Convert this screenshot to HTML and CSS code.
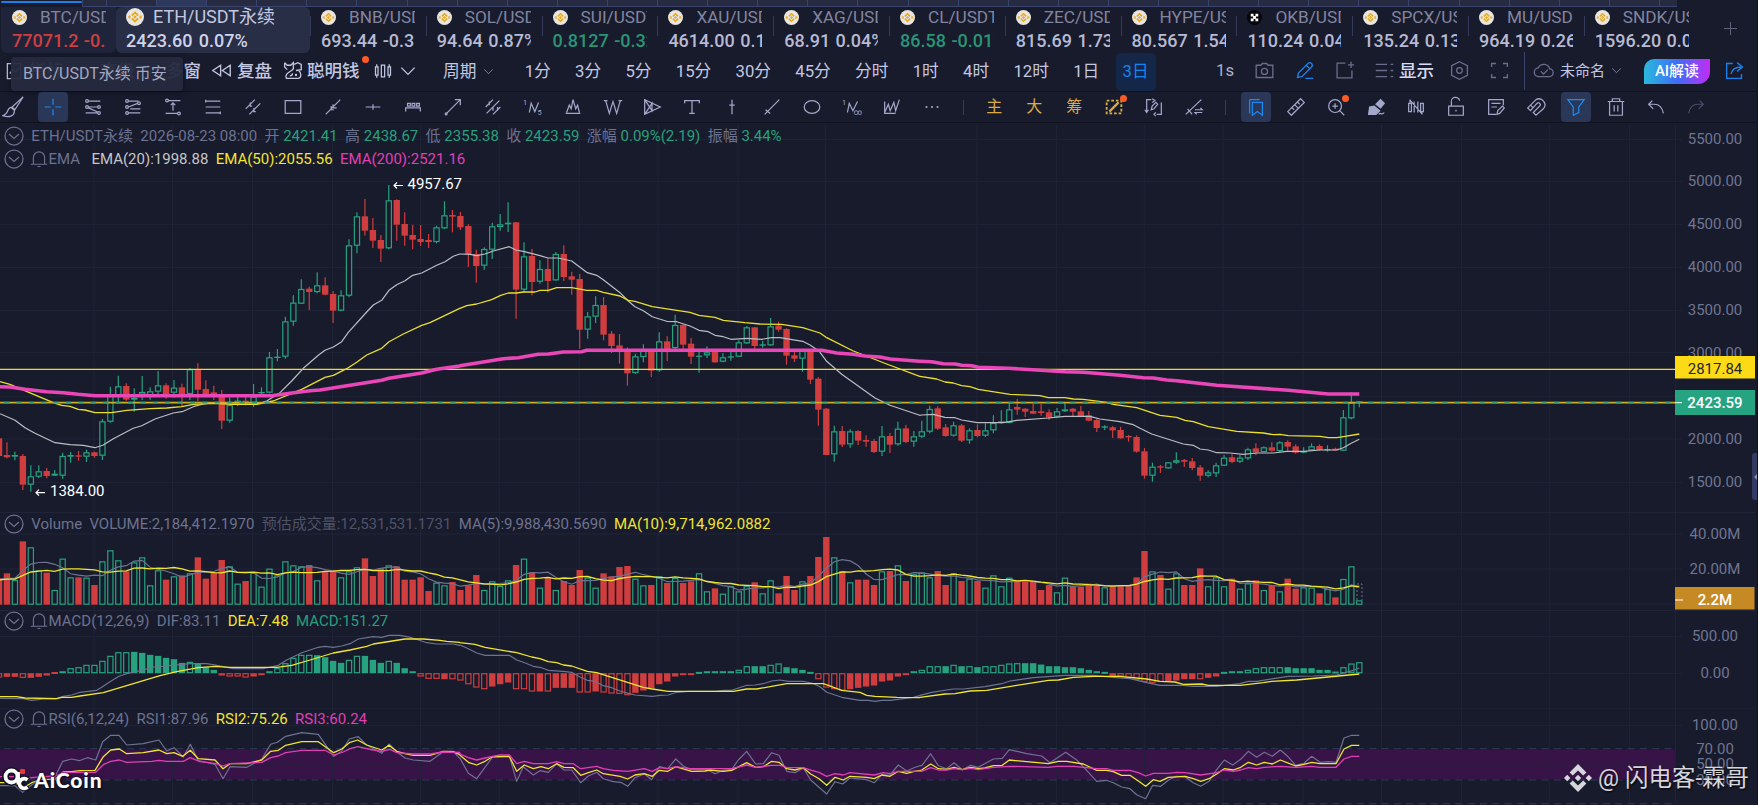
FILE: index.html
```html
<!DOCTYPE html>
<html lang="zh-CN">
<head>
<meta charset="utf-8">
<title>ETH/USDT永续 - AiCoin</title>
<link rel="stylesheet" href="styles.css">
</head>
<body>
<div class="app">
  <div class="strip"><i class="strip-active"></i><div class="strip-cells" id="strip"></div></div>
  <div class="tabs" id="tabs"></div>

  <div class="periodbar">
    <div class="pgroup tools">
      <span class="ic" data-icon="indicator"></span><span class="cn">指标</span>
      <span class="cn adv">高级</span>
      <span class="cn multi">多窗</span>
      <span class="ic rewind" data-icon="rewind"></span><span class="cn">复盘</span>
      <span class="ic fox" data-icon="fox"></span><span class="cn money">聪明钱<b class="dot"></b></span>
      <span class="ic kline" data-icon="kline"></span><span class="ic chev" data-icon="chevron"></span>
    </div>
    <div class="pgroup periods">
      <span class="cycle">周期 <span class="ic small" data-icon="chevron"></span></span>
      <span>1分</span><span>3分</span><span>5分</span><span>15分</span><span>30分</span><span>45分</span><span>分时</span><span>1时</span><span>4时</span><span>12时</span><span>1日</span><span class="on">3日</span>
    </div>
    <div class="pgroup right">
      <span class="sec">1s</span>
      <span class="cell dim" data-icon="camera"></span>
      <span class="cell blue" data-icon="pen"></span>
      <span class="cell dim" data-icon="addbox"></span>
      <span class="cell dim" data-icon="list"></span>
      <span class="cn show">显示</span>
      <span class="cell dim" data-icon="hex"></span>
      <span class="cell dim" data-icon="full"></span>
      <i class="vline"></i>
      <span class="cell dim cloud" data-icon="cloud"></span>
      <span class="unnamed">未命名</span>
      <span class="ic small dim2" data-icon="chevron"></span>
      <span class="ai">AI解读</span>
      <span class="cell blue share" data-icon="share"></span>
    </div>
    <div class="tooltip">BTC/USDT永续 币安</div>
  </div>

  <div class="drawbar" id="drawbar"></div>

  <div class="pane price">
    <svg id="price" width="1758" height="390" viewBox="0 123 1758 390"></svg>
    <div class="legend first">
      <span class="fold" data-icon="fold"></span>
      <span class="sym">ETH/USDT永续</span><span class="date">2026-08-23 08:00</span>
      <span>开 <b>2421.41</b></span><span>高 <b>2438.67</b></span><span>低 <b>2355.38</b></span><span>收 <b>2423.59</b></span><span>涨幅 <b>0.09%(2.19)</b></span><span>振幅 <b>3.44%</b></span>
    </div>
    <div class="legend second">
      <span class="fold" data-icon="fold"></span>
      <span class="bell" data-icon="bell"></span><span class="name">EMA</span><span class="w">EMA(20):1998.88</span><span class="y">EMA(50):2055.56</span><span class="m">EMA(200):2521.16</span>
    </div>
  </div>
  <div class="pane volume">
    <svg id="volume" width="1758" height="97" viewBox="0 513 1758 97"></svg>
    <div class="legend">
      <span class="fold" data-icon="fold"></span>
      <span>Volume</span><span>VOLUME:2,184,412.1970</span><span class="faint">预估成交量:12,531,531.1731</span><span>MA(5):9,988,430.5690</span><span class="y">MA(10):9,714,962.0882</span>
    </div>
  </div>
  <div class="pane macd">
    <svg id="macd" width="1758" height="98" viewBox="0 610 1758 98"></svg>
    <div class="legend">
      <span class="fold" data-icon="fold"></span>
      <span class="bell" data-icon="bell"></span><span>MACD(12,26,9)</span><span>DIF:83.11</span><span class="y">DEA:7.48</span><span class="g">MACD:151.27</span>
    </div>
  </div>
  <div class="pane rsi">
    <svg id="rsi" width="1758" height="97" viewBox="0 708 1758 97"></svg>
    <div class="legend">
      <span class="fold" data-icon="fold"></span>
      <span class="bell" data-icon="bell"></span><span>RSI(6,12,24)</span><span>RSI1:87.96</span><span class="y">RSI2:75.26</span><span class="m">RSI3:60.24</span>
    </div>
    <div class="brand">
      <svg width="30" height="26" viewBox="0 0 30 26"><g fill="none" stroke="#111320" stroke-width="7"><circle cx="10.500" cy="9.500" r="6"/><path d="M17.500 9v8M27 13.500a4.500 4.500 0 1 0 0 6"/></g><g fill="none" stroke="#fff" stroke-width="3.800"><circle cx="10.500" cy="9.500" r="6"/><path d="M17 5v9c0 2 1 2.500 2 2.500M26.500 13a4.800 4.800 0 1 0 0 7"/></g><rect x="19" y="2" width="5" height="5" rx="1" fill="#e23b37"/></svg>
      <span>AiCoin</span>
    </div>
    <div class="sign">
      <svg width="28" height="28" viewBox="0 0 28 28" fill="#e4e4e9"><path d="M14 0l8.400 8.400-3.200 3.200L14 6.400l-5.200 5.200-3.200-3.200zM14 28l8.400-8.400-3.200-3.200L14 21.600l-5.200-5.200-3.200 3.200zM3.200 10.800L6.400 14l-3.200 3.200L0 14zM24.800 10.800L28 14l-3.200 3.200L21.600 14zM14 10.800l3.200 3.200-3.200 3.200-3.200-3.200z"/></svg>
      <span>@ 闪电客-霖哥</span>
    </div>
  </div>
  <div class="handle"></div>
</div>
<script src="chart.js"></script>
</body>
</html>
```

FILE: styles.css
```css
* { box-sizing: border-box; }
body { margin: 0; background: #181a2b; font-family: Roboto, "Noto Sans CJK SC", sans-serif; color: #c3c7dd; }
.app { position: relative; width: 1758px; height: 805px; overflow: hidden; display: flex; flex-direction: column; background: #181b2c; border-right: 1px solid #10121f; }
svg { display: block; }

.strip { flex: none; height: 7px; display: flex; padding-left: 1px; }
.strip-active { width: 81px; height: 2px; margin-top: 1px; background: #1a7fe8; border-radius: 2px; }
.strip-cells { display: flex; width: 1595px; overflow: hidden; background: #272b41; border-bottom: 1px solid #39436b; }
.strip-cells i { flex: none; width: 50.100px; border-right: 1px solid #39436b; }
.strip-cells i:first-child { width: 25px; border-left: 1px solid #39436b; }
.strip-cells i.hl { background: #2c395c; }

.tabs { flex: none; height: 46px; display: flex; padding-left: 1px; }
.tab { flex: none; position: relative; width: 115.800px; padding: 0 10px 0 11px; overflow: hidden; color: #b7bad3; }
.tab + .tab::before { content: ""; position: absolute; left: 0; top: 9px; width: 1px; height: 20px; background: #333a5c; }
.tab .body { overflow: hidden; width: 94px; white-space: nowrap; }
.tab .top { display: flex; align-items: center; height: 20px; line-height: 20px; gap: 13px; font-size: 17.200px; color: #8285a0; }
.tab .top svg { flex: none; }
.tab .num { font-size: 18px; font-weight: 500; line-height: 28px; word-spacing: 1px; }
.tab.red { width: 115px; background: #20243a; border-radius: 0 0 6px 6px; color: #cf3f40; }
.tab.red .num { color: #cf3f40; }
.tab.green .num { color: #2a9575; }
.tab.main { width: 194px; background: #272e45; border-radius: 6px; color: #cfd3ea; padding-left: 10px; }
.tab.main .body { width: 175px; }
.tab.main .top { gap: 9px; color: #c3c7e0; font-size: 18px; }
.tab.main .num { word-spacing: 2px; }
.tab.main::before { display: none; }
.plus { flex: 1; display: flex; align-items: center; justify-content: center; padding: 0 0 4px 4px; }

.periodbar { flex: none; position: relative; height: 39px; display: flex; align-items: center; border-bottom: 1px solid #10121f; padding-bottom: 3px; font-size: 16.700px; line-height: 20px; color: #c3c8e2; white-space: nowrap; }
.pgroup { display: flex; align-items: center; height: 100%; }
.cn { font-size: 17.500px; font-weight: 500; }
.ic svg { display: block; width: 20px; height: 20px; }
.ic { flex: none; }
.tools { width: 443px; flex: none; padding-left: 4px; }
.tools .adv { margin-left: 36px; }
.tools .multi { margin-left: 31px; }
.tools .cn:nth-child(2) { margin-left: 5px; }
.rewind { margin: 0 5px 0 10px; }
.rewind svg, .fox svg { width: 21px; height: 21px; }
.tools .adv, .tools .multi { width: 35px; }
.fox { margin: 0 4px 0 10px; }
.money { position: relative; }
.dot { position: absolute; right: -9px; top: -5px; width: 7px; height: 7px; border-radius: 50%; background: #ff5a26; }
.kline { margin-left: 13px; }
.chev { margin-left: 5px; }
.periods { gap: 24.300px; width: 773px; flex: none; padding-top: 2px; }
.cycle { display: flex; align-items: center; gap: 6px; margin-right: 5px; }
.small svg { width: 13px; height: 13px; color: #8d91ac; }
.periods .on { margin: 1px 0 0 -8px; padding: 0 7px; height: 38px; line-height: 37px; color: #1583f0; background: #152748; border-radius: 5px; }
.right { flex: 1; }
.sec { width: 28px; color: #adb1ca; }
.cell { width: 40px; flex: none; display: flex; justify-content: center; }
.cell svg { width: 21px; height: 21px; }
.dim { color: #686e8c; }
.blue { color: #1a82ee; }
.show { width: 40px; margin-left: -5px; color: #d7daf0; }
.vline { width: 1px; height: 38px; background: #39436b; margin-left: 5px; }
.cloud { width: 34px; margin-left: 1px; }
.unnamed { font-size: 15px; width: 50px; }
.ai { margin-left: 21px; width: 66px; height: 25px; line-height: 25px; text-align: center; border-radius: 10px 0 12px 0; background: linear-gradient(90deg, #29b9de, #3f6df5 50%, #c12cf5); color: #fff; font-size: 15px; font-weight: 500; margin-top: 2px; }
.share { margin-left: 4px; }
.tooltip { position: absolute; left: 11px; top: 4px; width: 172px; height: 34px; line-height: 34px; padding-left: 12px; border-radius: 4px; background: rgba(38, 42, 62, .95); color: #a3a7c1; font-size: 16px; box-shadow: 0 1px 6px rgba(0, 0, 0, .4); }

.drawbar { flex: none; height: 31px; display: flex; border-bottom: 1px solid #10121f; }
.tool { position: relative; flex: none; width: 39.970px; height: 30px; display: flex; align-items: center; justify-content: center; color: #a3a7c9; }
.tool:first-child { margin-left: -7px; }
.tool svg { width: 22px; height: 22px; stroke-width: 1.350; }
.tool.active::before { content: ""; position: absolute; left: 5px; top: 0; width: 30px; height: 30px; border-radius: 4px; background: #2a3757; }
.tool.active svg { position: relative; color: #1a8af5; }
.tool.gold { color: #d9ab44; font-size: 16px; line-height: 30px; }
.tool.low { color: #474c66; }
.tool b.dot { right: 7px; top: 3px; }
.bar { flex: none; width: 22px; display: flex; align-items: center; justify-content: center; }
.bar::before { content: ""; width: 1px; height: 15px; background: #363d5c; }

.pane { position: relative; flex: none; }
.price { height: 390px; }
.volume { height: 97px; }
.macd { height: 98px; }
.rsi { height: 97px; }
.legend { position: absolute; left: 4px; top: 1px; height: 20px; line-height: 20px; display: flex; align-items: center; font-size: 15px; color: #6c7290; white-space: nowrap; gap: 7.300px; }
.legend.first { top: 3px; }
.legend.second { top: 26px; }
.legend b { font-weight: 400; color: #27a07c; }
.fold svg { width: 20px; height: 20px; }
.bell { margin: 0 -7px 0 -1px; }
.bell svg { width: 18px; height: 18px; }
.name { margin-right: 4px; }
.legend .w { color: #c6c6c8; }
.legend .y { color: #f1e530; }
.legend .m { color: #e03fb6; }
.legend .g { color: #27a07c; }
.legend .faint { color: #4e5268; }
.brand { position: absolute; left: 1px; top: 59px; display: flex; align-items: center; color: #fff; }
.brand span { font: 900 21px/26px Lato, sans-serif; letter-spacing: .9px; text-shadow: 0 0 3px #0c0d16, 1px 1px 1px #0c0d16; margin-left: 3px; }
.sign { position: absolute; left: 1564px; top: 52px; display: flex; align-items: center; gap: 6px; color: #e4e4e9; opacity: .93; }
.sign span { font-size: 23.400px; line-height: 36px; letter-spacing: .1px; white-space: nowrap; text-shadow: 1px 1px 2px #000; }
.handle { position: absolute; left: 1752px; top: 453px; width: 6px; height: 47px; border-radius: 3px 0 0 3px; background: #343b62; }
.handle::before { content: ""; position: absolute; left: 2px; top: 20px; border: 4px solid transparent; border-right-color: #8a90b0; border-left: 0; }
```

FILE: chart.js
```js
const o = (x, y, r) => `<circle cx="${x}" cy="${y}" r="${r}"/>`;
const p = d => `<path d="${d}"/>`;
const t = (x, y, s, str) => `<text x="${x}" y="${y}" font-size="${s}" fill="currentColor" stroke="none">${str}</text>`;
const icons = {
  indicator: p('M4 3h16v18H4zM7 15l4-5 3 3 4-5'),
  rewind: p('M11 6L2 12l9 6zM22 6l-9 6 9 6z'),
  fox: p('M3 3l3 3h4l3-3v7l-2 2c-5 3-8 5-6 9h13c5 0 4-7 1-9M14 5l4-2 4 2v6l-6 1M9 18c2 0 3-1 3-3M3 3v5l3 3') + o(16, 17, .6),
  kline: p('M3 7h3v10H3zM10 5h4v14h-4zM18 7h3v10h-3zM4.500 4v3M4.500 17v3M19.500 4v3M19.500 17v3'),
  chevron: p('M4 8l8 8 8-8'),
  camera: p('M2.500 6H8l1.500-2h5L16 6h5.500v14h-19z') + o(12, 13, 3.5),
  pen: p('M4 20l1-5L16 4q2-2 4 0t0 4L9 19zM14 6l4 4M13 21h9'),
  addbox: p('M13 3.500H3.500v17h17V12M19.500 2v7M16 5.500h7'),
  list: p('M2 5h13M2 12h13M2 19h13M19 5h3M19 12h3M19 19h3'),
  hex: p('M12 2l9 4.500v11L12 22l-9-4.500v-11z') + o(12, 12, 3.2),
  full: p('M3 8V4h5M16 4h5v4M21 16v4h-5M8 20H3v-4'),
  cloud: p('M7 19a5 5 0 0 1-1-10 7 7 0 0 1 13 1 4.500 4.500 0 0 1-1 9zM9 13l3 3 5-5'),
  share: p('M10 4H3v17h17v-5M8 16c1-6 5-8 12-8M15 3l6 5-6 5'),
  fold: o(12, 12, 10.8) + p('M6 9.500l6 5.500 6-5.500'),
  bell: p('M1 19h22M4.500 19v-9a7.500 7.500 0 0 1 15 0v9M10 22h4'),
  brush: p('M23 1L11 12l3 3zM10 12.500c-5 0-2 7-9 9 6 2 13 1 12.500-6z'),
  cross: p('M12 3v6.500M12 14.500V21M3 12h6.500M14.500 12H21'),
  fib1: o(5.5, 5.500, 1.5) + o(5.5, 12, 1.5) + o(18.5, 12, 1.5) + o(18.5, 18.500, 1.5) + p('M7 5.500h13M7 12h10M4 18.500h13M7 13l10 4.500') ,
  fib2: o(5.5, 5.500, 1.5) + o(5.5, 12, 1.5) + o(5.5, 18.500, 1.5) + o(18.5, 8, 1.5) + p('M7 5.500h11M7 18.500h13M9 14h11M7 12l10-4'),
  span: p('M7 5h13M12 16V8M9.500 10L12 7.500l2.500 2.500M4 19h13') + o(5.5, 5, 1.5) + o(18.5, 19, 1.5),
  lines: p('M4 5.500h16M4 12h16M4 18.500h16M4 4v3M20 17v3'),
  chan: p('M4 14L14 4M8 20L20 8M9 7v4h2M13 13v4h2'),
  rect: p('M3.500 5h17v14h-17z'),
  seg: p('M4 20L20 4M10 11v4h3M12 9v4h4'),
  hray: p('M4 12h16M12 9v6'),
  ruler3: p('M4 17v-4h16v4M6 8h3v3H6zM11 8h3v3h-3zM16 8h3v3h-3z'),
  arrow: p('M5 19L20 4M14 4h6v6') + o(4.5, 19.500, 1),
  chan3: p('M4 12l8-8M5 19L19 5M12 20l8-8M8 6v4M12 12v4M17 12v4'),
  n5: p('M8 18l2-10 4 9 4-10') + t(1, 10, 8, '1') + t(17, 21, 8, '5'),
  peaks: p('M4 19h16M5 18l3-8 2 4 2-10 3 10 2-4 2 8'),
  zigzag: p('M4 5l4 14 4-13 4 13 4-14M2 5h4M18 5h4'),
  tri: p('M4 4v16l17-8zM4 4l8 12V8L4 20'),
  text: p('M4 8V5h16v3M12 5v14M9 19h6'),
  vert: p('M12 4v16M9 10h6'),
  diag: p('M4 20L20 4M5 15l5 4'),
  oval: `<ellipse cx="12" cy="12" rx="8.500" ry="7"/>`,
  n8: p('M7 18l2-10 4 8 5-10') + t(1, 10, 8, '1') + t(14, 21, 9, '∞'),
  wave: p('M4 6v13h12M4 18l4-9 2 7 4-9 2 9 4-12'),
  dots: o(6, 12, .5) + o(12, 12, .5) + o(18, 12, .5),
  dashbox: `<path stroke-width="2" stroke-dasharray="3 2" d="M4 5h16v14H4z"/>` + `<path stroke-width="2.500" d="M7 17L17 7"/>`,
  loop: p('M9 4H4v13M2 15l2 3 2-3M15 20h5V7M10 3l3 2-3 2M9 15l1-4 4-4 2 2-4 5zM14 18l-2 2 2 2'),
  swap: p('M3 20L20 4M5 14l5 6M13 15h8l-2-2M21 18h-8l2 2'),
  mark: p('M5 4h11M5 4v15M8 7h11v14l-5.500-4L8 21z'),
  ruler: p('M3 17L17 3l4 4L7 21zM8 13l2 2M11 10l3 3M14 7l2 2'),
  zoomin: o(11, 11, 7) + p('M16 16l5 5M8 11h6M11 8v6'),
  marker: `<path fill="currentColor" d="M4 20l1-8 5-1 6 5-4 4zM12 9l5-5 4 4-4 5z"/>` + p('M15 20c2-3 3 2 6-2'),
  hide: p('M4 8h3v9H4zM17 8h3v9h-3zM10 6v12M14 6v12M5.500 5v3M18.500 17v3M5 4l14 16'),
  lock: p('M4 11h16v10H4zM7 11V7a4.500 4.500 0 0 1 9-2M12 15v2'),
  note: p('M20 10V4H4v16h8M7 8h10M7 12h6M13 20l1-4 5-5 2 2-5 6z'),
  magnet: p('M3 13L12 4a6.500 6.500 0 0 1 8 10L12 21l-3-3 7-7a2 2 0 0 0-3-3l-7 8zM6 10l3 3'),
  filter: p('M3 4h18l-6 8v6l-6 3v-9z'),
  trash: p('M3 6h18M8 6V3h8v3M5 6v15h14V6M10 10v7M14 10v7'),
  undo: p('M8 5L4 9l5 5M4 9h6c6 0 9 4 10 10'),
  redo: p('M16 5l4 4-5 5M20 9h-6C8 9 5 13 4 19')
};
const svg = n => `<svg viewBox="0 0 24 24" fill="none" stroke="currentColor" stroke-width="1.500">${icons[n]}</svg>`;
document.querySelectorAll('[data-icon]').forEach(e => { e.innerHTML = svg(e.dataset.icon); });

document.getElementById('strip').innerHTML = Array.from({ length: 33 }, (_, i) => `<i class="${i === 2 ? 'hl' : ''}"></i>`).join('');

const coin = (s, okb) => okb
  ? `<svg width="${s}" height="${s}" viewBox="0 0 16 16"><circle cx="8" cy="8" r="8" fill="#050507"/><path fill="#fff" d="M4 4h3v3H4zM9 4h3v3H9zM6.500 6.500h3v3h-3zM4 9h3v3H4zM9 9h3v3H9z"/></svg>`
  : `<svg width="${s}" height="${s}" viewBox="0 0 16 16"><circle cx="8" cy="8" r="8" fill="#e9e6e0"/><path fill="none" stroke="#eaa81c" stroke-width="1.600" d="M5.200 6.800L8 4l2.800 2.800M5.200 9.200L8 12l2.800-2.800M3.600 6.900L2.700 8l.9 1.100M12.400 6.900l.9 1.100-.9 1.100"/><path fill="#eaa81c" d="M8 6.400L9.600 8 8 9.600 6.400 8z"/></svg>`;
document.getElementById('tabs').innerHTML = [
  ['BTC/USDT永续', '77071.2 -0.12%', 'red'], ['ETH/USDT永续', '2423.60 0.07%', 'main'],
  ['BNB/USDT永续', '693.44 -0.31%', ''], ['SOL/USDT永续', '94.64 0.87%', ''], ['SUI/USDT永续', '0.8127 -0.32%', 'green'],
  ['XAU/USDT永续', '4614.00 0.12%', ''], ['XAG/USDT永续', '68.91 0.04%', ''], ['CL/USDT永续', '86.58 -0.01%', 'green'],
  ['ZEC/USDT永续', '815.69 1.73%', ''], ['HYPE/USDT永续', '80.567 1.54%', ''], ['OKB/USDT永续', '110.24 0.04%', ''],
  ['SPCX/USDT永续', '135.24 0.13%', ''], ['MU/USDT永续', '964.19 0.26%', ''], ['SNDK/USDT永续', '1596.20 0.01%', '']
].map(([a, b, c]) => `<div class="tab ${c}"><div class="body"><div class="top">${coin(c === 'main' ? 18 : 15, a.startsWith('OKB'))}<span>${a}</span></div><div class="num">${b}</div></div></div>`).join('') +
  '<div class="plus"><svg width="13" height="13" stroke="#5c617c"><path d="M6.500 0v13M0 6.500h13"/></svg></div>';

document.getElementById('drawbar').innerHTML =
  'brush *cross fib1 fib2 span lines chan rect seg hray ruler3 arrow chan3 n5 peaks zigzag tri text vert diag oval n8 wave dots | 主 大 筹 gold:dashbox loop swap | *mark ruler zoomin marker hide lock note magnet *filter trash undo low:redo'
    .split(' ').map(s => {
      if (s === '|') return '<span class="bar"></span>';
      if (s.length === 1) return `<span class="tool gold">${s}</span>`;
      const n = s.replace(/^.*:|\*/, '');
      const dot = n === 'dashbox' || n === 'zoomin' ? '<b class="dot"></b>' : '';
      const c = s[0] === '*' ? 'active' : s.includes(':') ? s.split(':')[0] : '';
      return `<span class="tool ${c}">${svg(n)}${dot}</span>`;
    }).join('');

/* ---------- chart data, stored in thirds of a pixel from each block's origin ---------- */
const X = i => 6.95 + 7.955 * i;
const GREEN = '#26a27f', RED = '#cf3d3e', GRID = '#1f2437';

/* direction high open/close-top open/close-bottom low */
const blocks = [[-1, 170, `r805,805,858,858 r817,855,862,865 g845,855,860,871 r852,858,944,960 g886,919,944,965 g886,904,920,924 r894,903,918,925 g900,911,917,918 g848,858,917,926 g846,855,860,878 r843,856,860,872 g839,847,860,876 r845,847,858,863 g747,754,857,870 g650,676,755,758 g617,649,676,698 r640,648,689,692 g655,683,689,725 g618,666,674,690 g652,664,675,689 g603,646,665,680 r640,646,672,686 g630,653,668,683 r641,652,675,708 g594,598,672,690 r580,598,659,694 r631,657,672,676 r647,667,676,690 r660,677,752,777 g682,705,752,758 g681,692,704,708 r680,692,696,706 g642,680,699,711 g652,666,670,680 g546,562,668,670 g537,560,564,574 g440,454,560,566 g376,398,455,467 g328,357,401,402 r350,356,366,420 g307,346,366,370 r322,346,374,376 r363,372,422,459 g361,376,422,424 g208,226,377,382 g127,139,227,250 r87,139,182,197 r144,180,212,234 r195,210,236,276 g45,91,235,238 r88,90,164,212 r127,162,197,227 r164,195,209,238 r165,207,216,228 r192,210,216,234 g167,172,216,220 g94,136,175,177 r120,135,140,187 r126,138,172,180 r163,168,252,291 r239,252,288,338 g232,237,287,300 g158,169,239,267 g132,163,171,182 g97,158,163,186 r156,157,359,446 g217,259,359,368 r237,258,336,376 g271,297,335,341 r265,297,333,368 g246,252,331,332 r226,252,321,333 r305,319,329,374 r312,327,479,536 g426,439,479,506 g379,405,440,459 r381,405,494,511 r483,491,528,549 r492,526,541,581 r532,541,610,647 g551,559,609,611 g523,541,561,577 r539,541,602,621 g487,514,601,605 r499,514,542,573 g434,465,534,538 r463,465,524,538 r504,521,560,582 g541,557,560,608 g529,547,556,564 r541,543,577,578 g550,562,575,577 g541,559,563,572 g511,517,560,561 g468,472,520,522 r471,472,528,538 g512,523,527,533 g444,469,526,527 r455,467,479,485 r475,477,557,584 r541,556,566,576 g541,543,566,605 r541,543,629,642 r622,626,719,767 r714,716,855,856 g767,784,853,875 r768,783,824,831 g778,784,823,833 r781,783,812,825 r796,810,815,830 r807,813,846,849 g768,799,845,858 r789,798,824,849 g755,776,823,827 r765,775,816,820 g783,799,815,830 g752,784,800,804`],
[116, 300, `g317,327,395,400 r319,325,386,390 r372,382,408,410 g365,376,407,410 r372,376,422,426 g385,391,421,431 r373,390,408,412 g370,391,407,411 g346,369,391,400 g331,364,369,371 g308,328,369,370 r297,321,329,344 r325,326,335,351 r312,333,341,343 r312,334,339,347 r328,337,353,360 g324,334,350,352 g310,328,334,336 r324,326,335,348 r318,334,348,350 r333,346,362,364 r357,360,384,396 g376,379,383,390 r378,382,391,414 r380,390,415,416 r405,408,412,425 r406,411,455,458 r444,454,527,536 g488,500,527,545 r495,499,503,519 g486,487,505,506 g457,481,488,491 r477,480,485,501 r474,484,504,511 r495,502,527,542 g511,517,527,532 g488,496,520,531 g465,473,497,498 r463,472,486,490 g465,473,485,489 g443,448,475,480 r430,445,457,466 g439,442,456,457 r427,442,452,455 g424,427,453,457 r421,426,440,453 r433,439,458,461 g442,453,458,460 g430,439,451,452 r433,438,450,452 g436,447,451,455 r443,446,451,452 g330,352,452,453 g277,308,355,358 g303,304,308,322`]];
const candles = blocks.flatMap(([i0, oy, s]) => s.split(' ').map((c, k) => {
  const [h, a, b, l] = c.slice(1).split(',').map(v => oy + v / 3);
  return { i: i0 + k, up: c[0] === 'g', h, a, b, l };
}));

const line = (oy, segs, color, w) => `<polyline fill="none" stroke="${color}" stroke-width="${w}" stroke-linejoin="round" points="${segs.flatMap((s, k) =>
  s.split(' ').map(q => { const [x, y] = q.split(',').map(Number); return [k * 460 + x / 3, (Array.isArray(oy) ? oy[k] : oy) + y / 3]; })
).map(a => a[0].toFixed(1) + ',' + a[1].toFixed(1)).join(' ')}"/>`;

const vx = [94, 172.7, 252.7, 332.7, 420.7, 499.3, 579.3, 658, 738, 825.3, 977, 1056.7, 1144.3, 1223, 1303, 1381.5, 1461.4, 1549.3, 1629.4, 1675.4];
const grid = (y0, y1, hs, sep) => vx.map(x => `<path d="M${x} ${y0}V${y1}"/>`).join('') + hs.map(y => `<path d="M0 ${y}H1682"/>`).join('') + (sep ? `<path d="M0 ${sep}H1755"/>` : '');
const G = s => `<g stroke="${GRID}" stroke-width="1">${s}</g>`;
const axis = a => `<g font-size="15" fill="#6f7590" text-anchor="middle">${a.map(([y, s]) => `<text x="1715" y="${y + 5}">${s}</text>`).join('')}</g>`;
const box = (x, y, h, color, hollow) => hollow
  ? `<rect x="${x - 2.6}" y="${y + .5}" width="5.200" height="${Math.max(h - 1, .6)}" fill="#181b2c" stroke="${color}" stroke-width="1.200"/>`
  : `<rect x="${x - 3.2}" y="${y}" width="6.400" height="${Math.max(h, 1.2)}" fill="${color}"/>`;

/* price pane */
document.getElementById('price').innerHTML =
  G(grid(125, 513, [139.4, 181.4, 224.4, 267.6, 310.4, 352.7, 396.3, 439, 482.4], 512.5)) +
  candles.map(c => {
    const col = c.up ? GREEN : RED, x = X(c.i);
    return `<path stroke="${col}" stroke-width="1.200" d="M${x} ${c.h}V${c.l}"/>` + box(x, c.a, c.b - c.a, col, c.up && c.b - c.a > 2);
  }).join('') +
  `<path stroke="#f5da1c" stroke-width="1.300" d="M0 369.300H1675"/>` +
  line([170, 170, 300], [
    '0,731 45,751 75,773 105,790 165,818 210,824 250,826 285,833 310,825 340,806 400,775 425,767 465,747 520,729 550,724 580,710 610,702 640,699 700,702 770,702 800,693 840,668 875,633 910,595 955,556 975,541 1000,531 1025,515 1045,487 1100,426 1120,405 1145,391 1167,361 1190,344 1215,332 1238,316 1265,309 1310,286 1335,275 1360,259 1379,252',
    '0,252 30,253 50,257 75,252 100,243 148,230 168,240 190,244 240,257 264,264 295,264 335,273 382,308 410,316 430,329 480,368 505,393 525,410 550,422 577,440 620,454 650,455 690,468 717,481 745,485 765,496 790,500 813,508 860,505 905,508 935,503 960,503 1028,514 1050,525 1078,544 1100,574 1145,613 1245,684 1290,706 1379,736',
    '5,345 40,343 75,352 105,353 125,360 172,368 250,368 290,361 385,354 435,349 510,349 540,357 600,365 640,374 660,385 695,402 790,432 820,436 840,447 865,450 890,458 930,459 970,463 1010,459 1060,459 1100,454 1150,454 1200,450 1250,450 1270,443 1295,429 1318,418'], '#bcbdc4', 1.2) +
  line([170, 170, 300], [
    '0,635 30,643 65,658 160,698 185,706 210,709 235,718 255,720 285,728 335,728 380,721 450,716 500,714 545,710 580,703 640,700 700,703 770,703 820,693 905,658 975,622 1000,616 1040,596 1070,577 1100,555 1145,535 1167,515 1210,492 1265,466 1290,458 1379,415',
    '0,415 20,407 50,402 95,389 122,376 145,369 170,369 190,366 225,366 240,361 265,361 290,353 335,353 380,361 410,361 430,367 480,378 505,391 525,394 577,410 690,427 717,436 765,442 790,451 855,458 900,462 965,463 1028,473 1080,489 1100,503 1180,543 1280,582 1379,619',
    '0,229 50,237 75,246 100,249 125,257 150,260 175,268 270,283 360,287 385,293 435,293 460,297 490,298 560,307 580,313 650,323 720,346 770,352 795,361 820,365 865,380 950,394 1030,399 1060,404 1080,403 1105,407 1200,409 1225,413 1250,413 1275,409 1318,402'], '#e9df2c', 1.3) +
  line([170, 170, 300], [
    '0,650 30,651 75,658 140,665 190,668 235,673 285,677 815,677 870,670 930,662 960,660 1145,631 1167,625 1265,609 1310,598 1379,588',
    '0,587 130,566 175,563 235,553 265,552 310,546 365,545 380,541 1085,541 1130,549 1180,553 1215,558 1260,561 1290,567 1379,574',
    '0,184 35,185 70,191 105,192 125,196 155,197 175,202 265,205 435,215 490,217 600,226 670,233 700,234 740,240 770,242 890,256 1105,271 1225,282 1318,282'], '#ea46b8', 3.6) +
  `<path stroke="#c9ae26" stroke-width="1.700" d="M0 402.700H1675"/><path stroke="#3aa06c" stroke-width="1.700" stroke-dasharray="5 7.400" d="M4 402.700H1675"/>` +
  `<g fill="#fff" font-size="15"><text x="407.500" y="188.500">4957.67</text><text x="50" y="495.500">1384.00</text></g>` +
  `<g stroke="#fff" stroke-width="1.200" fill="none"><path d="M403 185.500h-9M397 182.500l-3 3 3 3M45 492.700h-9M39 489.700l-3 3 3 3"/></g>` +
  axis([[138.6, '5500.00'], [181, '5000.00'], [223.7, '4500.00'], [267.3, '4000.00'], [310, '3500.00'], [352.5, '3000.00'], [438.6, '2000.00'], [482, '1500.00']]) +
  `<rect x="1675" y="356" width="80" height="22.500" fill="#fcdb16"/><rect x="1675" y="390" width="80" height="25" fill="#26a381"/><path stroke="#fff" d="M1675 402.700h7"/>` +
  `<g font-size="15" text-anchor="middle"><text x="1715" y="373.800" fill="#25242c">2817.84</text><text x="1715" y="407.500" fill="#fff" font-weight="500">2423.59</text></g>`;

/* volume pane: top edge of every bar */
const vol = '205 190 210 94 112 181 188 240 146 202 202 203 225 154 121 151 184 157 142 226 181 209 199 196 190 142 206 188 150 169 221 213 188 230 176 196 154 166 169 165 211 185 184 202 184 172 145 198 175 166 169 209 209 202 243 218 226 216 240 226 195 240 214 228 211 165 146 187 233 202 240 213 225 180 203 233 190 199 171 168 206 226 225 199 219 204 219 214 190 244 235 251 229 244 228 217 250 211 250 198 240 214 198 141 81 142 183 217 209 209 225 184 183 166 213 193 188 202 183 225 190 213 206 213 233 196 229 203 215 215 214 240 225 247 203 230 230 221 228 232 226 226 226 202 123 184 195 236 190 225 225 175 229 202 229 206 236 220 211 240 226 244 206 236 232 233 250 237 262 207 169 271'.split(' ').map(v => 510 + v / 3);
const avg = n => vol.map((_, k) => {
  let s = 0;
  for (let j = 0; j < n; j++) s += k - j < 0 ? 580 : vol[k - j];
  return X(k - 1).toFixed(1) + ',' + (s / n).toFixed(1);
}).join(' ');
document.getElementById('volume').innerHTML =
  G(grid(513, 610, [534, 569, 604], 0)) +
  vol.map((y, k) => box(X(k - 1), y, 604.7 - y, candles[k].up ? GREEN : RED, candles[k].up)).join('') +
  `<path fill="none" stroke="#7a6f86" stroke-dasharray="2 2" d="M1357 600v-16h5v16"/>` +
  `<polyline fill="none" stroke="#6d7391" stroke-width="1.200" points="${avg(5)}"/><polyline fill="none" stroke="#f0e52f" stroke-width="1.300" points="${avg(10)}"/>` +
  axis([[533.7, '40.00M'], [568.7, '20.00M']]) +
  `<rect x="1675" y="587" width="79.500" height="22.500" fill="#c68a25"/><path stroke="#fff" d="M1675 600h8"/><text x="1715" y="604.800" fill="#fff" font-size="15" font-weight="500" text-anchor="middle">2.2M</text>`;

/* MACD pane: signed bar length, "o" marks an outlined bar */
const hist = '-13o -11 -11 -14o -14 -11 -7 5 6 15o 18o 25o 25o 37o 52o 63o 63o 64 61 55 52 46 42 31 34o 28 18 10 -7 -10o -10o -13o -10 -6 6 15o 30o 46o 55o 55o 54 48 37 31 40o 52o 52 40 31 37o 31 15 6 -10o -17o -17o -18 -18o -22o -33o -43o -48o -40 -33 -28 -48o -48o -55o -55 -55o -44 -44 -44 -58o -58o -55 -58o -61o -62o -66o -59 -52 -46 -33 -25 -10 -4 -4 4 6 6 6 6 10o 21o 21 21 25o 29o 18 15 10 4 -18o -43o -48o -52o -48 -44 -40 -37 -25 -22 -10 -6 6 10o 21o 21o 21 25o 21 21o 18 21o 21o 25o 29o 30o 30 30 26 21 21 18 18 15 10 6 4 -8 -10o -15o -20o -26o -29o -26o -24 -22 -18 -18 -18o -14 -10 4 6 6 10o 15o 18o 18o 18o 18 15 15 15 10 10 5 18o 29o 33o'.split(' ');
document.getElementById('macd').innerHTML =
  G(grid(610, 708, [636.4, 673.6], 610.5)) +
  hist.map((s, k) => {
    const v = parseFloat(s) / 3, red = v < 0 || k === 7;
    return box(X(k - 1), red ? 673.2 - (k === 7 ? 1.2 : 0) : 673.2 - v, Math.max(Math.abs(v), 2), red ? RED : GREEN, s.endsWith('o'));
  }).join('') +
  line(510, ['0,565 70,566 95,571 130,567 165,567 190,559 215,555 240,547 290,541 305,532 332,514 357,499 380,491 430,480 460,471 500,468 570,461 620,461 655,467 700,476 790,476 835,466 860,450 905,428 955,412 975,409 1000,412 1025,408 1050,401 1075,387 1120,380 1145,382 1167,376 1200,376 1235,383 1280,398 1310,402 1360,402 1379,406',
    '0,405 25,416 50,429 75,436 148,436 170,450 190,457 220,469 240,472 265,481 310,484 335,487 360,501 382,511 405,514 430,527 455,533 480,543 505,550 525,555 577,559 600,556 625,555 650,547 685,544 765,544 790,541 815,541 860,526 885,525 910,521 935,513 960,510 985,514 1028,514 1055,519 1080,530 1100,547 1145,562 1200,571 1225,571 1245,574 1265,571 1290,571 1360,562 1379,557',
    '0,556 35,547 100,537 130,537 195,530 245,521 270,513 340,503 435,496 520,496 580,502 630,506 680,518 720,526 790,526 820,529 890,529 960,521 985,514 1010,514 1105,499 1180,498 1250,495 1275,488 1300,481 1318,474'], '#6d7391', 1.2) +
  line(510, ['0,560 50,560 75,564 170,566 185,562 215,562 240,558 310,548 410,518 480,497 530,485 595,473 645,469 690,472 830,472 875,466 930,450 1000,429 1050,420 1100,409 1120,402 1215,387 1270,387 1320,391 1340,394 1379,397',
    '0,398 45,403 75,412 170,428 215,441 240,446 265,455 290,458 310,465 335,468 382,484 410,488 505,518 550,532 577,537 625,544 820,544 860,537 890,537 980,521 1090,521 1105,526 1145,541 1200,547 1220,556 1245,559 1310,562 1379,563',
    '0,562 75,552 105,551 150,543 200,541 290,526 385,511 415,510 460,502 520,499 600,499 680,507 720,514 765,516 790,523 845,522 865,526 960,526 1030,518 1055,514 1130,510 1318,492'], '#f0e52f', 1.3) +
  axis([[636, '500.00'], [673.4, '0.00']]);

/* RSI pane */
document.getElementById('rsi').innerHTML =
  `<rect x="0" y="749.500" width="1675" height="29.500" fill="#381347"/>` +
  G(grid(708, 805, [725.4, 764], 708)) +
  `<path stroke="#2f3a56" stroke-dasharray="7 5.300" d="M4 748.700H1675M4 780H1675M4 803.700H1675"/>` +
  line(510, ['0,827 45,827 68,847 95,825 130,800 165,800 188,754 215,747 238,752 262,743 287,750 308,695 332,676 357,676 380,705 430,701 477,690 500,723 522,713 550,741 571,703 595,752 620,757 645,763 669,806 690,770 740,772 785,748 812,703 832,697 857,679 905,668 955,673 1001,739 1025,724 1048,687 1075,680 1100,705 1145,730 1167,702 1190,725 1215,744 1240,750 1290,754 1330,725 1360,724 1379,745',
    '0,745 25,790 50,806 97,742 148,738 170,814 190,770 220,795 240,782 265,787 290,761 312,780 335,780 362,818 385,798 410,787 430,806 455,814 485,818 503,829 525,803 553,792 575,809 598,770 623,776 647,747 670,768 690,778 740,778 765,791 790,781 815,778 835,750 860,724 887,762 910,761 935,728 957,736 980,784 1005,788 1030,774 1052,810 1100,852 1125,815 1148,822 1170,804 1220,809 1243,818 1265,795 1290,795 1315,765 1340,783 1362,773 1379,767',
    '5,767 32,731 55,767 80,776 102,758 127,779 152,766 175,772 220,747 247,745 268,719 320,731 365,738 390,758 437,727 470,750 500,781 530,814 560,811 580,818 605,831 630,836 650,854 677,866 698,826 722,829 745,811 768,799 795,800 820,818 842,829 867,814 890,779 913,750 938,765 962,748 985,724 1010,742 1033,727 1057,739 1081,720 1103,739 1127,766 1152,760 1175,739 1200,757 1225,755 1248,757 1272,684 1295,676 1318,676'], '#6d7391', 1.2) +
  line(510, ['0,818 45,818 68,835 95,818 125,808 165,808 190,785 215,785 240,782 285,781 310,740 332,720 358,717 380,731 430,728 477,720 500,731 522,728 548,739 571,721 595,746 645,750 669,776 690,761 740,761 785,750 812,724 835,721 857,706 905,695 955,695 1001,728 1025,717 1050,697 1073,690 1100,705 1145,720 1167,706 1190,724 1215,731 1240,736 1290,736 1330,724 1360,725 1379,734',
    '0,736 27,758 50,765 75,754 97,740 148,739 170,784 193,765 220,776 243,770 265,776 290,761 312,772 340,773 362,796 385,788 410,780 430,791 480,799 503,807 525,795 553,791 577,799 598,781 623,784 647,770 695,784 735,783 750,780 790,784 815,781 860,758 887,772 910,770 935,754 957,757 980,776 1005,780 1030,773 1052,792 1077,806 1100,826 1125,802 1150,810 1170,799 1220,802 1243,806 1265,795 1290,799 1315,784 1340,790 1362,784 1379,782',
    '5,780 32,762 55,776 80,778 102,772 127,779 152,772 175,776 195,774 220,767 247,766 268,750 320,755 385,761 415,754 440,754 490,762 530,781 560,781 580,785 605,796 630,796 655,813 677,829 700,809 720,814 745,802 795,799 820,806 842,814 867,806 890,792 913,776 940,780 962,772 985,757 1010,765 1033,757 1057,762 1081,750 1127,768 1152,763 1175,757 1200,761 1248,761 1272,717 1295,706 1318,706'], '#f0e52f', 1.3) +
  line(510, ['0,800 50,800 85,804 130,800 165,798 190,787 287,787 310,764 332,754 358,750 380,757 455,754 477,751 500,754 550,754 571,743 600,755 645,760 669,768 690,761 785,757 812,743 835,738 857,728 905,721 975,721 1001,735 1030,726 1050,716 1073,710 1120,720 1145,724 1170,718 1190,728 1240,732 1290,732 1330,726 1379,727',
    '0,732 25,743 50,750 75,744 97,739 120,735 148,735 170,761 193,754 220,761 265,761 290,755 312,761 340,761 362,776 410,769 430,776 460,781 503,784 553,776 577,784 598,773 623,776 647,770 690,776 815,776 860,765 887,772 935,766 960,766 980,772 1030,773 1055,781 1077,787 1100,799 1125,791 1150,795 1170,788 1243,795 1270,788 1290,791 1315,784 1379,784',
    '5,784 32,773 55,780 80,780 102,776 127,779 152,775 175,779 220,772 268,769 385,772 410,769 460,769 530,776 560,776 580,781 630,781 655,788 677,798 700,790 745,790 770,787 795,788 842,795 890,788 913,780 940,784 962,780 985,773 1010,776 1033,772 1081,769 1127,772 1175,769 1200,772 1248,772 1272,747 1295,739 1318,739'], '#e03fb6', 1.3) +
  axis([[724.5, '100.00'], [748.6, '70.00'], [763.5, '50.00'], [779.5, '30.00']]);
```
